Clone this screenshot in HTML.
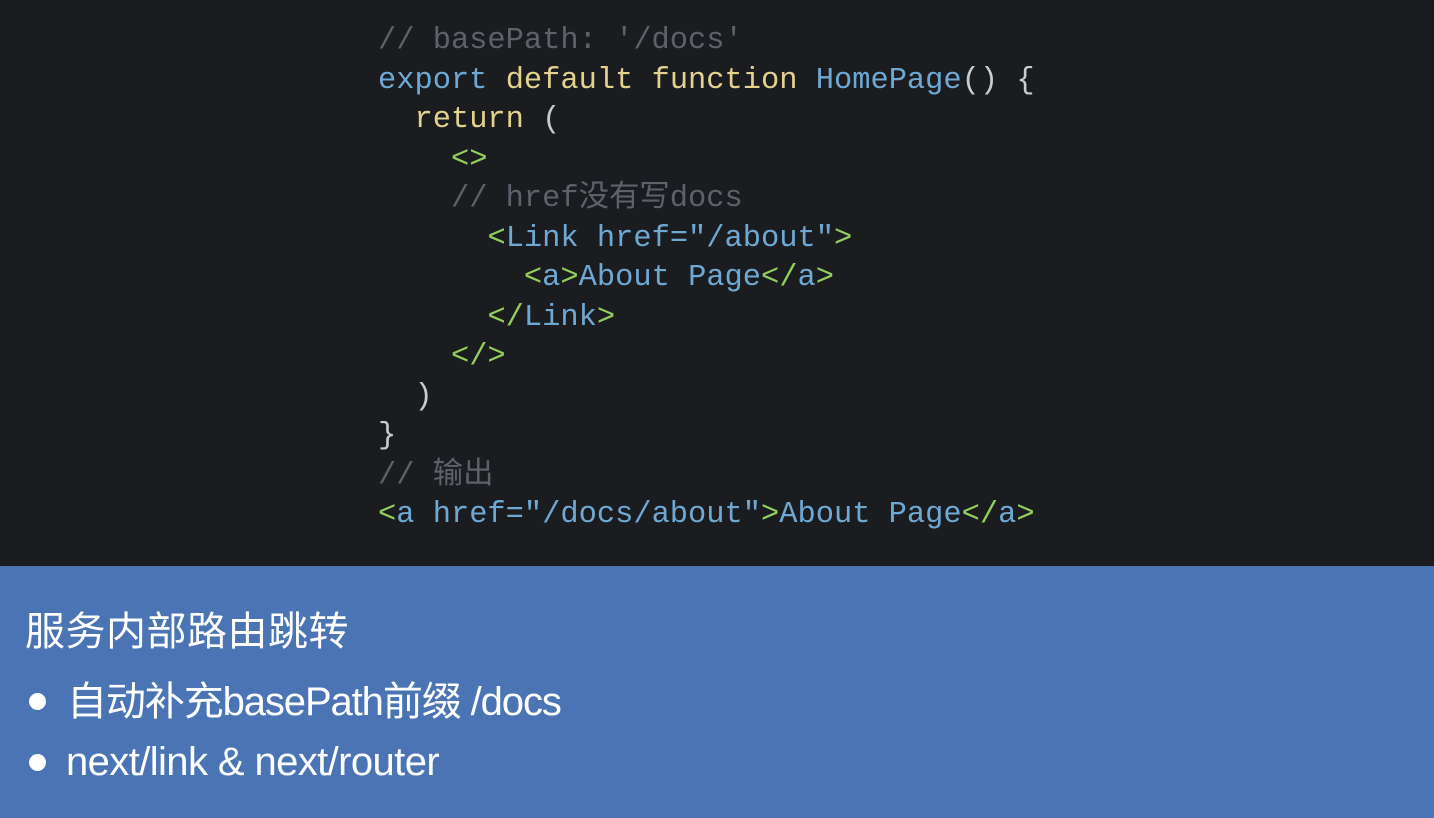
<!DOCTYPE html><html><head><style>
body{margin:0;width:1434px;height:818px;background:#1b1c20;overflow:hidden;position:relative}
pre{position:absolute;left:378px;top:22px;margin:0;font-family:"Liberation Mono","Noto Sans CJK SC",monospace;font-size:30.4px;line-height:39.5px;color:#c8ccd2}
.c{color:#5c626a}.b{color:#6ea9d4}.y{color:#e2d28e}.g{color:#92cf5c}.t{color:#c8ccd2}
.panel{position:absolute;left:0;top:566px;width:1434px;height:252px;background:#4a74b3;color:#fff;font-family:"Liberation Sans","Noto Sans CJK SC",sans-serif}
.panel div{position:absolute;white-space:nowrap;line-height:1}
.dot{width:17px;height:17px;border-radius:50%;background:#fff;left:29px}
</style></head><body>
<pre><span class="c">// basePath: '/docs'</span>
<span class="b">export</span> <span class="y">default function</span> <span class="b">HomePage</span>() {
  <span class="y">return</span> (
    <span class="g">&lt;&gt;</span>
    <span class="c">// href没有写docs</span>
      <span class="g">&lt;</span><span class="b">Link href="/about"</span><span class="g">&gt;</span>
        <span class="g">&lt;</span><span class="b">a</span><span class="g">&gt;</span><span class="b">About Page</span><span class="g">&lt;/</span><span class="b">a</span><span class="g">&gt;</span>
      <span class="g">&lt;/</span><span class="b">Link</span><span class="g">&gt;</span>
    <span class="g">&lt;/&gt;</span>
  )
}
<span class="c">// 输出</span>
<span class="g">&lt;</span><span class="b">a href="/docs/about"</span><span class="g">&gt;</span><span class="b">About Page</span><span class="g">&lt;/</span><span class="b">a</span><span class="g">&gt;</span></pre>
<div class="panel">
<div style="left:25px;top:46px;font-size:40px;letter-spacing:0.5px">服务内部路由跳转</div>
<div class="dot" style="top:127px"></div>
<div style="left:67px;top:116px;font-size:40px;letter-spacing:-1.1px">自动补充basePath前缀 /docs</div>
<div class="dot" style="top:188px"></div>
<div style="left:66px;top:176px;font-size:40px;letter-spacing:-0.6px">next/link &amp; next/router</div>
</div>
</body></html>
